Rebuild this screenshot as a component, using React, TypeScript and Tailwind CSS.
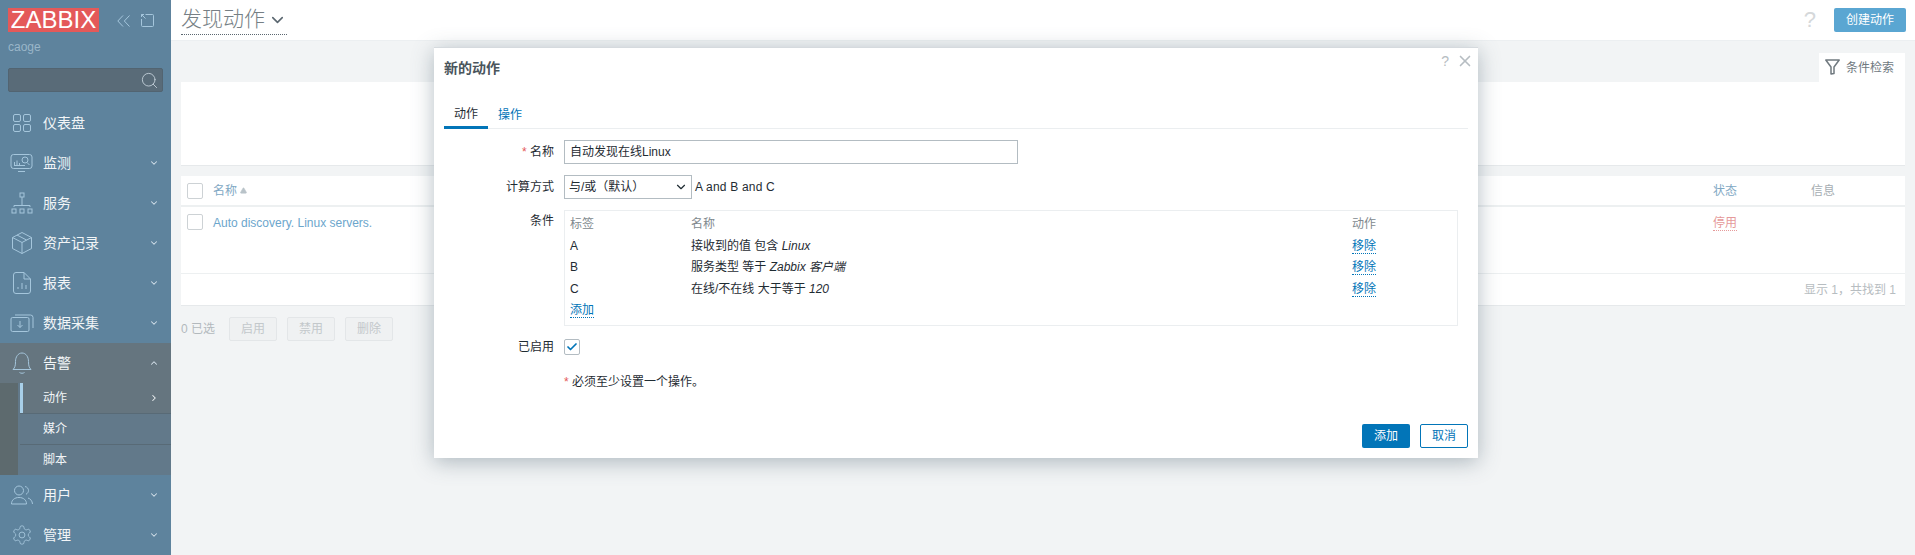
import React from 'react';
import { ChevronDown, ChevronUp, ChevronRight, X, Check, Search, Triangle } from 'lucide-react';

const font = 'font-["Liberation_Sans","Noto_Sans_CJK_SC",sans-serif]';

function IconDash() {
  return (
    <svg width="20" height="20" viewBox="0 0 20 20" fill="none" stroke="currentColor" strokeWidth="1">
      <rect x="1.500" y="1.500" width="7" height="7" rx="1.500" />
      <rect x="11.500" y="1.500" width="7" height="7" rx="1.500" />
      <rect x="1.500" y="11.500" width="7" height="7" rx="1.500" />
      <rect x="11.500" y="11.500" width="7" height="7" rx="1.500" />
    </svg>
  );
}
function IconMonitor() {
  return (
    <svg width="24" height="20" viewBox="0 0 24 20" fill="none" stroke="currentColor" strokeWidth="1">
      <rect x="1" y="1.500" width="21" height="14" rx="2.500" />
      <path d="M8 18.500h7M4.500 12V9M7 12V7.500M9.500 12V10M4 12.500h11" />
      <circle cx="15" cy="7" r="3" />
      <path d="M17 9.500l2.500 2.500" />
    </svg>
  );
}
function IconService() {
  return (
    <svg width="22" height="22" viewBox="0 0 22 22" fill="none" stroke="currentColor" strokeWidth="1">
      <rect x="9" y="1" width="4" height="4" />
      <rect x="1" y="17" width="4" height="4" />
      <rect x="9" y="17" width="4" height="4" />
      <rect x="17" y="17" width="4" height="4" />
      <path d="M11 5v9M3 15v-1.500h16V15" />
    </svg>
  );
}
function IconBox() {
  return (
    <svg width="22" height="24" viewBox="0 0 22 24" fill="none" stroke="currentColor" strokeWidth="1">
      <path d="M11 1.500l9.500 5v11L11 22.500l-9.500-5v-11zM1.500 6.500l9.500 5 9.500-5M11 11.500v11M6 4l9.500 5" />
    </svg>
  );
}
function IconReport() {
  return (
    <svg width="20" height="24" viewBox="0 0 20 24" fill="none" stroke="currentColor" strokeWidth="1">
      <path d="M12 1.500H4A2.500 2.500 0 0 0 1.500 4v16A2.500 2.500 0 0 0 4 22.500h12a2.500 2.500 0 0 0 2.500-2.500V8zM12 1.500V8h6.500M6 18v-2M10 18v-6M14 18v-4" />
    </svg>
  );
}
function IconData() {
  return (
    <svg width="24" height="20" viewBox="0 0 24 20" fill="none" stroke="currentColor" strokeWidth="1">
      <rect x="1" y="4.500" width="18" height="14" rx="1.500" />
      <path d="M5 2h15.500A2.500 2.500 0 0 1 23 4.500V15M10 8v6.500M7.500 12l2.500 2.500 2.500-2.500" />
    </svg>
  );
}
function IconBell() {
  return (
    <svg width="20" height="24" viewBox="0 0 20 24" fill="none" stroke="currentColor" strokeWidth="1">
      <path d="M1 18.500c2-2 2.500-4 2.500-8C3.500 6 6 2 10 2s6.500 4 6.500 8.500c0 4 .5 6 2.500 8zM7.500 21.500c1.500 1 3.500 1 5 0" />
    </svg>
  );
}
function IconUsers() {
  return (
    <svg width="22" height="20" viewBox="0 0 22 20" fill="none" stroke="currentColor" strokeWidth="1">
      <circle cx="8" cy="5.500" r="4.500" />
      <path d="M.5 19c0-4 3-6.500 7.500-6.500s7.500 2.500 7.500 6.500zM14 1.500c2.500.5 3.500 2.500 3.500 4s-1 3-2.500 3.800M17 13c2.500.8 4.300 3 4.500 6" />
    </svg>
  );
}
function IconGear() {
  return (
    <svg width="22" height="22" viewBox="0 0 24 24" fill="none" stroke="currentColor" strokeWidth="1">
      <path d="M12.220 2h-.44a2 2 0 0 0-2 2v.18a2 2 0 0 1-1 1.730l-.43.250a2 2 0 0 1-2 0l-.15-.08a2 2 0 0 0-2.730.730l-.22.380a2 2 0 0 0 .730 2.730l.15.100a2 2 0 0 1 1 1.720v.510a2 2 0 0 1-1 1.740l-.15.090a2 2 0 0 0-.730 2.730l.22.380a2 2 0 0 0 2.730.730l.15-.08a2 2 0 0 1 2 0l.43.250a2 2 0 0 1 1 1.730V20a2 2 0 0 0 2 2h.44a2 2 0 0 0 2-2v-.18a2 2 0 0 1 1-1.730l.43-.250a2 2 0 0 1 2 0l.15.080a2 2 0 0 0 2.730-.730l.22-.390a2 2 0 0 0-.730-2.730l-.15-.080a2 2 0 0 1-1-1.740v-.500a2 2 0 0 1 1-1.740l.15-.090a2 2 0 0 0 .730-2.730l-.22-.380a2 2 0 0 0-2.730-.730l-.15.080a2 2 0 0 1-2 0l-.43-.250a2 2 0 0 1-1-1.730V4a2 2 0 0 0-2-2z" />
      <circle cx="12" cy="12" r="3.200" />
    </svg>
  );
}

function NavItem({ icon, label, open }: { icon: React.ReactNode; label: string; open?: boolean }) {
  return (
    <div className="flex items-center h-10 text-[#f2f5f7]">
      <div className="w-[43px] flex justify-center text-[#a5c6dc] shrink-0">{icon}</div>
      <span className="text-[14px] flex-1">{label}</span>
      {open === undefined ? null : open ? (
        <ChevronUp size={10} className="mr-3 text-[#d5e2eb]" strokeWidth={2.5} />
      ) : (
        <ChevronDown size={10} className="mr-3 text-[#d5e2eb]" strokeWidth={2.5} />
      )}
    </div>
  );
}

function Sidebar() {
  return (
    <aside className="w-[171px] shrink-0 bg-[#5e839d] flex flex-col">
      <div className="flex items-start pl-2 pt-2 h-[39px] shrink-0 text-[#a5c6dc]">
        <div className="bg-[#e45959] text-white text-[24px] leading-6 h-6 w-[91px] text-center">ZABBIX</div>
        <svg width="13" height="12" viewBox="0 0 13 12" fill="none" stroke="currentColor" className="ml-[18px] mt-[7px]">
          <path d="M6 .5L.8 6 6 11.500M12.500.5L7.300 6l5.200 5.500" />
        </svg>
        <svg width="13" height="13" viewBox="0 0 13 13" fill="none" stroke="currentColor" className="ml-[11px] mt-[6px]">
          <path d="M4.500 .5h7a1 1 0 0 1 1 1v10a1 1 0 0 1-1 1h-10a1 1 0 0 1-1-1V5M.5 .5l4 4M.5 3V.5H3" />
        </svg>
      </div>
      <div className="text-[12px] leading-4 pl-2 text-[#9ab6c9] h-[29px]">caoge</div>
      <div className="mx-2 h-[24px] rounded-[2px] bg-[#596b78] border border-[#526471] flex items-center justify-end pr-[3px] shrink-0">
        <Search size={19} className="text-[#c6d3dc]" strokeWidth={1.1} />
      </div>
      <div className="h-[11px] shrink-0" />
      <NavItem icon={<IconDash />} label="仪表盘" />
      <NavItem icon={<IconMonitor />} label="监测" open={false} />
      <NavItem icon={<IconService />} label="服务" open={false} />
      <NavItem icon={<IconBox />} label="资产记录" open={false} />
      <NavItem icon={<IconReport />} label="报表" open={false} />
      <NavItem icon={<IconData />} label="数据采集" open={false} />
      <div className="bg-[#65757f]">
        <NavItem icon={<IconBell />} label="告警" open />
        <div className="flex">
          <div className="w-[18px] bg-[#5d6a6e]" />
          <div className="w-[2px] bg-[#62798a]" />
          <div className="flex-1 text-[12px] text-[#f2f5f7]">
            <div className="h-[30px] flex items-center border-l-[3px] border-[#a8cfe8] pl-[20px]">
              <span className="flex-1">动作</span>
              <ChevronRight size={10} className="mr-3" strokeWidth={2.5} />
            </div>
            <div className="h-[32px] flex items-center pl-[23px] bg-[#62798a] border-y border-[#586a76]">媒介</div>
            <div className="h-[30px] flex items-center pl-[23px] bg-[#62798a]">脚本</div>
          </div>
        </div>
      </div>
      <NavItem icon={<IconUsers />} label="用户" open={false} />
      <NavItem icon={<IconGear />} label="管理" open={false} />
    </aside>
  );
}

function Box() {
  return <div className="w-4 h-4 bg-white border border-[#cdd2d5] rounded-[2px] shrink-0" />;
}

function Main() {
  return (
    <main className="flex-1 flex flex-col min-w-0">
      <header className="h-[41px] bg-white shrink-0 flex items-center pl-[10px] pr-[9px] border-b border-[#eceff1]">
        <span className="text-[21px] leading-[28px] text-[#767f85] font-light border-b border-dotted border-[#5b6770] flex items-center h-[31px] w-[106px] whitespace-nowrap mt-[-1px]">
          发现动作
          <ChevronDown size={20} strokeWidth={2} className="ml-[3px] mt-[2px] text-[#5b6770]" />
        </span>
        <span className="ml-auto text-[#d5d8da] text-[22px] leading-6 mr-[18px]">?</span>
        <button className="h-6 w-[72px] bg-[#5aa6d2] text-white text-[12px] rounded-[2px]">创建动作</button>
      </header>
      <div className="flex-1 bg-[#f2f4f5] px-[10px]">
        <div className="flex justify-end h-[41px] items-end">
          <div className="w-[86px] h-[29px] bg-white flex items-center pl-[6px] gap-[6px] text-[12px] text-[#70797f]">
            <svg width="15" height="16" viewBox="0 0 15 16" fill="none" stroke="currentColor" strokeWidth="1.500" className="mb-[2px]">
              <path d="M.8 1h13.400L9 8v6.500L6 15V8z" strokeLinejoin="round" />
            </svg>
            条件检索
          </div>
        </div>
        <div className="h-[84px] bg-white border-b border-[#e6e9eb]" />
        <div className="mt-[10px] bg-white">
          <div className="h-[31px] flex items-center pl-[6px] border-b-2 border-[#edf0f1] text-[12px] text-[#81a8c4]">
            <Box />
            <span className="ml-[10px] flex items-center">
              名称
              <Triangle size={7} className="ml-[3px] fill-[#b9c3c9] text-[#b9c3c9]" />
            </span>
            <div className="ml-auto flex w-[192px]">
              <span className="w-[98px]">状态</span>
              <span className="text-[#a6adb2]">信息</span>
            </div>
          </div>
          <div className="h-[67px] flex pl-[6px] pt-[7px] border-b border-[#edf0f1] text-[12px]">
            <Box />
            <span className="ml-[10px] text-[#6ca6cc]">Auto discovery. Linux servers.</span>
            <div className="ml-auto w-[192px] text-[#e59a9a]">
              <span className="border-b border-dotted border-[#e59a9a]">停用</span>
            </div>
          </div>
          <div className="h-[32px] flex items-center justify-end pr-[9px] pt-[1px] text-[12px] text-[#b7bdc1] border-b border-[#e6e9eb]">
            显示 1，共找到 1
          </div>
        </div>
        <div className="flex items-center mt-[11px] text-[12px] text-[#b3b9bd]">
          <span className="w-[48px]">0 已选</span>
          <div className="flex gap-[10px]">
            {['启用', '禁用', '删除'].map((t) => (
              <button key={t} className="w-12 h-6 bg-[#eff1f2] border border-[#e3e6e8] rounded-[2px] text-[#c3c8cb]">
                {t}
              </button>
            ))}
          </div>
        </div>
      </div>
    </main>
  );
}

const rows = [
  ['A', '接收到的值 包含 ', 'Linux'],
  ['B', '服务类型 等于 ', 'Zabbix 客户端'],
  ['C', '在线/不在线 大于等于 ', '120'],
];

function Dialog() {
  return (
    <div className="absolute left-[434px] top-[47px] w-[1044px] h-[411px] bg-white border-t border-[#d5dade] shadow-[0_4px_20px_rgba(90,110,125,0.45)] flex flex-col px-[10px] text-[12px] text-[#1f2c33]">
      <div className="absolute right-[4px] top-[3px] flex items-center gap-[7px] text-[#b6bdc2]">
        <span className="text-[14px] leading-5">?</span>
        <X size={18} strokeWidth={2.2} />
      </div>
      <div className="h-[29px] flex items-end text-[14px] leading-[18px] font-bold text-[#4a555c]">新的动作</div>
      <div className="flex mt-[24px] h-[28px] border-b border-[#ebeef0]">
        <div className="w-11 flex items-center justify-center border-b-[3px] border-[#0275b8] h-[28px] text-[#1f2c33]">动作</div>
        <div className="w-11 flex items-center justify-center h-[27px] text-[#0275b8]">操作</div>
      </div>
      <div className="mt-[11px] flex items-center h-6">
        <label className="w-[120px] pr-[10px] text-right">
          <span className="text-[#e45959]">* </span>名称
        </label>
        <div className="w-[454px] h-6 border border-[#b3bcc2] flex items-center px-[5px]">自动发现在线Linux</div>
      </div>
      <div className="mt-[11px] flex items-center h-6">
        <label className="w-[120px] pr-[10px] text-right">计算方式</label>
        <div className="w-[128px] h-6 border border-[#b3bcc2] flex items-center pl-[4px] pr-[3px]">
          <span className="flex-1">与/或（默认）</span>
          <ChevronDown size={14} strokeWidth={2} />
        </div>
        <span className="ml-[3px] tracking-[0.2px]">A and B and C</span>
      </div>
      <div className="mt-[11px] flex">
        <label className="w-[120px] pr-[10px] text-right leading-[22px]">条件</label>
        <div className="w-[894px] h-[116px] border border-[#ebeef0] px-[5px] pt-[3px]">
          <div className="grid grid-cols-[121px_1fr_100px] leading-[21.500px]">
            <span className="text-[#81898e]">标签</span>
            <span className="text-[#81898e]">名称</span>
            <span className="text-[#81898e]">动作</span>
            {rows.map((r) => (
              <React.Fragment key={r[0]}>
                <span>{r[0]}</span>
                <span>
                  {r[1]}
                  <i>{r[2]}</i>
                </span>
                <span>
                  <span className="text-[#0275b8] border-b border-dotted border-[#0275b8]">移除</span>
                </span>
              </React.Fragment>
            ))}
          </div>
          <span className="text-[#0275b8] border-b border-dotted border-[#0275b8] leading-[21.500px]">添加</span>
        </div>
      </div>
      <div className="mt-[13px] flex items-center h-4">
        <label className="w-[120px] pr-[10px] text-right">已启用</label>
        <div className="w-4 h-4 border border-[#b3bcc2] rounded-[2px] flex items-center justify-center">
          <Check size={12} strokeWidth={3.5} className="text-[#0275b8]" />
        </div>
      </div>
      <div className="mt-[18px] pl-[120px]">
        <span className="text-[#e45959]">* </span>必须至少设置一个操作。
      </div>
      <div className="mt-auto mb-[10px] flex justify-end gap-[10px]">
        <button className="w-12 h-6 bg-[#0275b8] text-white rounded-[2px]">添加</button>
        <button className="w-12 h-6 bg-white text-[#0275b8] border border-[#0275b8] rounded-[2px]">取消</button>
      </div>
    </div>
  );
}

export default function App() {
  return (
    <div className={'relative flex w-[1915px] h-[555px] overflow-hidden ' + font}>
      <Sidebar />
      <Main />
      <Dialog />
    </div>
  );
}
